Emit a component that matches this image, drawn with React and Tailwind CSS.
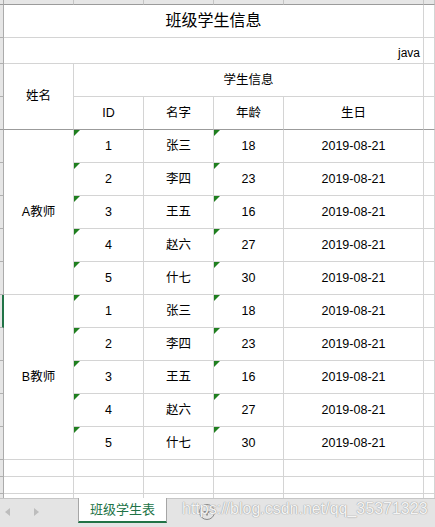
import React from "react";

const FONT = "font-['Liberation_Sans','Noto_Sans_CJK_SC',sans-serif]";
const G = "border-r border-b border-[#d4d4d4]";
const RH = "bg-[#e6e6e6] border-r border-b border-r-[#ababab] border-b-[#b0b0b0]";
const CENTER = "flex items-center justify-center";

function Tri() {
  return (
    <span className="absolute top-0 left-0 w-0 h-0 border-t-[6px] border-r-[6px] border-t-[#1f7f1f] border-r-transparent" />
  );
}

const groups = [
  { t: "A教师", rows: [["1", "张三", "18"], ["2", "李四", "23"], ["3", "王五", "16"], ["4", "赵六", "27"], ["5", "什七", "30"]] },
  { t: "B教师", rows: [["1", "张三", "18"], ["2", "李四", "23"], ["3", "王五", "16"], ["4", "赵六", "27"], ["5", "什七", "30"]] },
];

export default function App() {
  const dataCells = [];
  groups.forEach((g, gi) => {
    g.rows.forEach((r, ri) => {
      const k = `${gi}-${ri}`;
      dataCells.push(
        <div
          key={`rh${k}`}
          className={
            gi === 1 && ri === 0
              ? "bg-[#e6e6e6] border-b border-b-[#b0b0b0] border-r-2 border-r-[#217346]"
              : RH
          }
        />
      );
      if (ri === 0) {
        dataCells.push(
          <div key={`t${k}`} className={`${G} row-span-5 ${CENTER}`}>
            {g.t}
          </div>
        );
      }
      dataCells.push(
        <div key={`id${k}`} className={`${G} relative ${CENTER}`}>
          <Tri />
          {r[0]}
        </div>
      );
      dataCells.push(
        <div key={`n${k}`} className={`${G} ${CENTER}`}>
          {r[1]}
        </div>
      );
      dataCells.push(
        <div key={`a${k}`} className={`${G} relative ${CENTER}`}>
          <Tri />
          {r[2]}
        </div>
      );
      dataCells.push(
        <div key={`d${k}`} className={`${G} ${CENTER}`}>
          2019-08-21
        </div>
      );
      dataCells.push(<div key={`f${k}`} className={G} />);
    });
  });

  const emptyRows = [];
  for (let i = 0; i < 3; i++) {
    emptyRows.push(<div key={`erh${i}`} className={RH} />);
    for (let j = 0; j < 6; j++) {
      emptyRows.push(<div key={`e${i}-${j}`} className={G} />);
    }
  }

  return (
    <div className={`${FONT} w-[435px] h-[527px] bg-white text-black text-[12.5px] flex flex-col overflow-hidden`}>
      <div className="h-[498px] overflow-hidden">
        <div className="grid grid-cols-[4px_70px_70px_70px_70px_140px_1fr] grid-rows-[5px_33px_26px_33px_33px_repeat(10,33px)_17px_17px_17px]">
          {/* column header strip */}
          <div className="bg-[#e6e6e6] border-r border-b border-r-[#ababab] border-b-[#9b9b9b]" />
          {[0, 1, 2, 3, 4, 5].map((l) => (
            <div
              key={l}
              className="bg-[#e6e6e6] border-r border-b border-r-[#c4c4c4] border-b-[#9b9b9b]"
            />
          ))}

          {/* title row */}
          <div className={RH} />
          <div className={`${G} col-span-5 ${CENTER} text-[16px]`}>班级学生信息</div>
          <div className={G} />

          {/* java row */}
          <div className={RH} />
          <div className={`${G} col-span-5 flex items-end justify-end pr-[3px] pb-[1px] text-[12px]`}>java</div>
          <div className={G} />

          {/* header row 1 */}
          <div className={RH} />
          <div className="border-r border-b border-r-[#d4d4d4] border-b-[#9b9b9b] row-span-2 flex items-center justify-center">
            姓名
          </div>
          <div className={`${G} col-span-4 ${CENTER}`}>学生信息</div>
          <div className={G} />

          {/* header row 2 */}
          <div className="bg-[#e6e6e6] border-r border-b border-r-[#ababab] border-b-[#9b9b9b]" />
          {["ID", "名字", "年龄", "生日"].map((h) => (
            <div key={h} className={`border-r border-b border-r-[#d4d4d4] border-b-[#9b9b9b] ${CENTER}`}>
              {h}
            </div>
          ))}
          <div className="border-r border-b border-r-[#d4d4d4] border-b-[#9b9b9b]" />

          {dataCells}
          {emptyRows}
        </div>
      </div>

      {/* sheet tab bar */}
      <div className="relative h-[29px] bg-[#e4e4e4] border-t border-[#c6c6c6] flex items-start">
        <div className="w-[78px] h-full flex items-center pb-[2px]">
          <span className="ml-[5px] w-0 h-0 border-y-[4px] border-y-transparent border-r-[5px] border-r-[#bdbdbd]" />
          <span className="ml-[24px] w-0 h-0 border-y-[4px] border-y-transparent border-l-[5px] border-l-[#bdbdbd]" />
        </div>
        <div className="-mt-px h-[25px] w-[89px] bg-white border-x border-[#a6a6a6] border-b-2 border-b-[#217346] flex items-center justify-center text-[13px] text-[#217346]">
          班级学生表
        </div>
        <div className="ml-[32px] mt-[5px] w-[16px] h-[16px] rounded-full border border-[#8a8a8a] flex items-center justify-center">
          <svg width="10" height="10" viewBox="0 0 10 10">
            <path d="M5 1.5v7M1.5 5h7" stroke="#6e6e6e" strokeWidth="1.3" />
          </svg>
        </div>
        <div className="absolute left-[182px] top-[2px] text-[16px] leading-[16px] text-[#f4f4f4] [text-shadow:0_0_1px_#9a9a9a,0_0_1px_#9a9a9a] whitespace-nowrap pointer-events-none">
          https://blog.csdn.net/qq_35371323
        </div>
      </div>
    </div>
  );
}
